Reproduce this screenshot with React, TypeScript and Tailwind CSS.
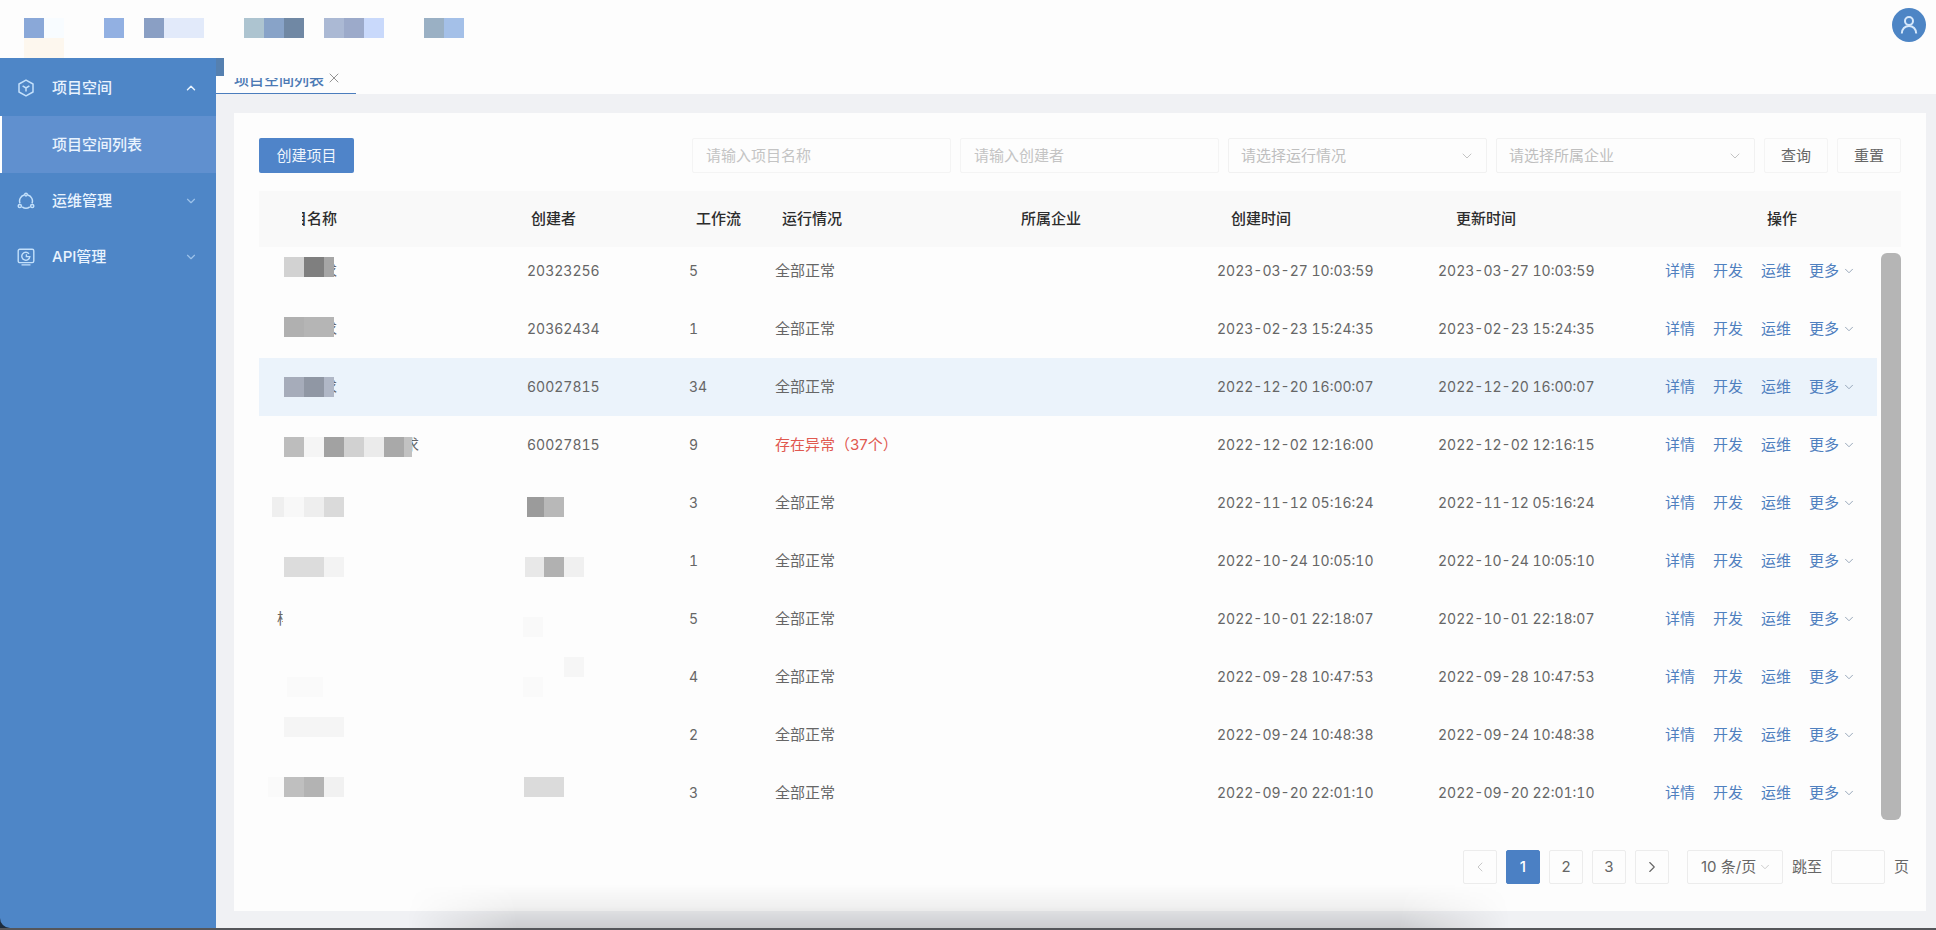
import React from "react";
import { ChevronDown, ChevronLeft, ChevronRight, ChevronUp, X } from "lucide-react";

type Tile = [x: number, y: number, w: number, fill: string];

const headerTiles: Tile[] = [
  [24, 0, 20, "#8aa8d8"],
  [44, 0, 20, "#f8fcff"],
  [104, 0, 20, "#92b0e2"],
  [144, 0, 20, "#8a9fc4"],
  [164, 0, 40, "#e2eafa"],
  [244, 0, 20, "#adc4d0"],
  [264, 0, 20, "#88a3c8"],
  [284, 0, 20, "#7088a4"],
  [324, 0, 20, "#abb9d4"],
  [344, 0, 20, "#9caaca"],
  [364, 0, 20, "#c9d9fb"],
  [424, 0, 20, "#9ab0c4"],
  [444, 0, 20, "#a4c0e8"],
  [24, 20, 40, "#fdf7ee"],
];

// Coordinates are relative to the top-left corner of the table body.
const bodyTiles: Tile[] = [
  [25, 10, 20, "#d2d2d2"],
  [45, 10, 20, "#7f7f7f"],
  [65, 10, 10, "#a6a6a6"],
  [25, 70, 20, "#b0b0b0"],
  [45, 70, 30, "#b5b5b5"],
  [25, 130, 20, "#a6acba"],
  [45, 130, 20, "#9097a4"],
  [65, 130, 10, "#b0b7c6"],
  [25, 190, 20, "#bdbdbd"],
  [45, 190, 20, "#f5f5f5"],
  [65, 190, 20, "#a2a2a2"],
  [85, 190, 20, "#d1d1d1"],
  [105, 190, 20, "#ebebeb"],
  [125, 190, 20, "#a9a9a9"],
  [145, 190, 8, "#c2c2c2"],
  [13, 250, 12, "#efefef"],
  [25, 250, 20, "#f8f8f8"],
  [45, 250, 20, "#eeeeee"],
  [65, 250, 20, "#dadada"],
  [268, 250, 17, "#9b9b9b"],
  [285, 250, 20, "#b8b8b8"],
  [25, 310, 40, "#dcdcdc"],
  [65, 310, 20, "#f3f3f3"],
  [266, 310, 19, "#e8e8e8"],
  [285, 310, 20, "#b1b1b1"],
  [305, 310, 20, "#f0f0f0"],
  [264, 370, 20, "#f9f9f9"],
  [305, 410, 20, "#f6f6f6"],
  [28, 430, 36, "#fafafa"],
  [264, 430, 20, "#fafafa"],
  [25, 470, 60, "#f5f5f5"],
  [9, 530, 16, "#fafafa"],
  [25, 530, 20, "#bfbfbf"],
  [45, 530, 20, "#b3b3b3"],
  [65, 530, 20, "#f1f1f1"],
  [265, 530, 40, "#dbdbdb"],
];

function Mosaic({ tiles, className }: { tiles: Tile[]; className: string }) {
  return (
    <svg className={className} shapeRendering="crispEdges" aria-hidden="true">
      {tiles.map(([x, y, w, fill]) => (
        <rect key={`${x}-${y}`} x={x} y={y} width={w} height={20} fill={fill} />
      ))}
    </svg>
  );
}

type Row = {
  name: "short" | "long" | "start" | "none";
  creator: string;
  flows: number;
  failures?: number;
  created: string;
  updated: string;
  active?: boolean;
};

const rows: Row[] = [
  { name: "short", creator: "20323256", flows: 5, created: "2023-03-27 10:03:59", updated: "2023-03-27 10:03:59" },
  { name: "short", creator: "20362434", flows: 1, created: "2023-02-23 15:24:35", updated: "2023-02-23 15:24:35" },
  { name: "short", creator: "60027815", flows: 34, created: "2022-12-20 16:00:07", updated: "2022-12-20 16:00:07", active: true },
  { name: "long", creator: "60027815", flows: 9, failures: 37, created: "2022-12-02 12:16:00", updated: "2022-12-02 12:16:15" },
  { name: "none", creator: "", flows: 3, created: "2022-11-12 05:16:24", updated: "2022-11-12 05:16:24" },
  { name: "none", creator: "", flows: 1, created: "2022-10-24 10:05:10", updated: "2022-10-24 10:05:10" },
  { name: "start", creator: "", flows: 5, created: "2022-10-01 22:18:07", updated: "2022-10-01 22:18:07" },
  { name: "none", creator: "", flows: 4, created: "2022-09-28 10:47:53", updated: "2022-09-28 10:47:53" },
  { name: "none", creator: "", flows: 2, created: "2022-09-24 10:48:38", updated: "2022-09-24 10:48:38" },
  { name: "none", creator: "", flows: 3, created: "2022-09-20 22:01:10", updated: "2022-09-20 22:01:10" },
];

function NameFragment({ kind }: { kind: Row["name"] }) {
  if (kind === "short") return <span className="ml-[56px] flex w-[4px] justify-end overflow-hidden">求</span>;
  if (kind === "long") return <span className="ml-[133px] flex w-[9px] justify-end overflow-hidden">求</span>;
  if (kind === "start") return <span className="flex w-[6px] overflow-hidden">样</span>;
  return null;
}

function CubeIcon() {
  return (
    <svg viewBox="0 0 18 18" className="size-[18px]" fill="none" stroke="currentColor" strokeWidth="1.5">
      <path d="M9 1.1 16 5v8L9 16.9 2 13V5Z" strokeLinejoin="round" />
      <path d="M5.6 6.8 9 9l3.4-2.2M9 9v3.6" />
    </svg>
  );
}

function CycleIcon() {
  return (
    <svg viewBox="0 0 18 18" className="size-[18px]" fill="none" stroke="currentColor" strokeWidth="1.5">
      <path d="M3 11.4A6.3 6.3 0 0 1 7.2 3M10.8 3A6.3 6.3 0 0 1 15 11.4M12.8 14.8a6.5 6.5 0 0 1-7.6 0" />
      <circle cx="9" cy="2.6" r="1.3" />
      <circle cx="2.8" cy="14" r="1.6" />
      <circle cx="15.2" cy="14" r="1.6" />
    </svg>
  );
}

function ApiIcon() {
  return (
    <svg viewBox="0 0 18 18" className="size-[18px]" fill="none" stroke="currentColor" strokeWidth="1.4">
      <rect x="1.2" y="1.2" width="15.6" height="13.4" rx="1.6" />
      <path d="M4.5 16.9h9M12 5.8A4 4 0 1 0 12.8 8.6H9.4V6.2" />
    </svg>
  );
}

function NavItem({ icon, label, open }: { icon: React.ReactNode; label: string; open?: boolean }) {
  return (
    <button type="button" aria-expanded={!!open} className="flex h-14 w-full items-center pr-[18px] pl-[17px] text-left">
      <span className="text-[#c3e0fb]">{icon}</span>
      <span className="ml-[17px] flex-1 font-medium">{label}</span>
      {open ? <ChevronUp className="size-[14px]" strokeWidth={2.5} /> : <ChevronDown className="size-[14px] text-[#9cc2ea]" strokeWidth={2} />}
    </button>
  );
}

function FilterSelect({ label }: { label: string }) {
  return (
    <div className="relative w-[259px]">
      <select aria-label={label} className="h-[35px] w-full appearance-none rounded-[2px] border border-[#f1f1f1] bg-transparent px-3 text-[#bfbfbf]">
        <option>{label}</option>
      </select>
      <ChevronDown className="pointer-events-none absolute top-[10px] right-3 size-4 text-[#c4c4c4]" strokeWidth={1.5} />
    </div>
  );
}

function Columns() {
  return (
    <colgroup>
      <col className="w-[250px]" />
      <col className="w-[162px]" />
      <col className="w-[86px]" />
      <col className="w-[242px]" />
      <col className="w-[200px]" />
      <col className="w-[221px]" />
      <col className="w-[228px]" />
      <col />
    </colgroup>
  );
}

const pageButton = "flex size-[34px] items-center justify-center rounded-[2px] border";
const numberCell = "pl-[18px] text-sm tabular-nums";

export default function App() {
  return (
    <div className="flex min-h-screen flex-col border-b-2 border-[#55565a] bg-[#fdfdfd] font-['Inter','Noto_Sans_CJK_SC',sans-serif] text-[15px] leading-6 text-[#666]">
      <header className="flex h-[58px] items-start justify-between pr-[10px]">
        <Mosaic tiles={headerTiles} className="mt-[18px] h-10 w-[480px]" />
        <button type="button" aria-label="用户" className="mt-2 flex size-[34px] items-center justify-center rounded-full bg-[#4d85c5] text-[#d6e8fb]">
          <svg viewBox="0 0 18 18" className="size-[18px]" fill="none" stroke="currentColor" strokeWidth="2">
            <circle cx="9" cy="5" r="4" />
            <path d="M1.8 17.6C1.8 13 5 10 9 10s7.2 3 7.2 7.6" />
          </svg>
        </button>
      </header>

      <div className="relative flex flex-1">
        <div className="flex w-[216px] shrink-0 bg-[#1d2c3d]">
          <nav className="relative flex-1 rounded-bl-[10px] bg-[#4e86c7] pt-[2px] text-[#e9f3fe]">
            <span className="absolute top-0 left-full h-[18px] w-2 bg-[#5580b0]" />
            <NavItem icon={<CubeIcon />} label="项目空间" open />
            <a href="#list" className="flex h-[57px] items-center border-l-2 border-white bg-[#6090cf] pl-[50px] font-medium">
              项目空间列表
            </a>
            <NavItem icon={<CycleIcon />} label="运维管理" />
            <NavItem icon={<ApiIcon />} label="API管理" />
          </nav>
        </div>

        <div className="flex min-w-0 flex-1 flex-col">
          <div className="flex h-9 bg-[#fdfdfd]">
            <div className="flex w-[140px] items-end border-b border-[#4b7dbd] pb-[3px] pl-[18px] leading-5 text-[#4b79b4]">
              <a href="#list" className="flex h-3 items-end overflow-hidden font-medium">
                项目空间列表
              </a>
              <button type="button" aria-label="关闭" className="ml-[2px] pb-1 text-[#777]">
                <X className="size-4" strokeWidth={1.2} />
              </button>
            </div>
          </div>

          <div className="flex flex-1 flex-col bg-[#f0f1f4] pt-[19px] pr-[10px] pb-[17px] pl-[18px]">
            <main className="flex flex-1 flex-col bg-[#fdfdfd] pt-[25px]">
              <div className="flex items-center justify-between px-[25px]">
                <button type="button" className="h-[35px] w-[95px] rounded-[2px] bg-[#4f84c9] text-[#eef5fd]">
                  创建项目
                </button>
                <form className="flex gap-[9px]">
                  <input aria-label="项目名称" placeholder="请输入项目名称" className="h-[35px] w-[259px] rounded-[2px] border border-[#f4f4f4] px-[13px] placeholder:text-[#c4c4c4]" />
                  <input aria-label="创建者" placeholder="请输入创建者" className="h-[35px] w-[259px] rounded-[2px] border border-[#f4f4f4] px-[13px] placeholder:text-[#c4c4c4]" />
                  <FilterSelect label="请选择运行情况" />
                  <FilterSelect label="请选择所属企业" />
                  <button type="button" className="h-[35px] w-16 rounded-[2px] border border-[#f4f4f4]">查询</button>
                  <button type="button" className="h-[35px] w-16 rounded-[2px] border border-[#f4f4f4]">重置</button>
                </form>
              </div>

              <div className="mt-[18px] px-[25px]">
                <div className="bg-[#f9f9f9] pr-6">
                  <table className="w-full table-fixed text-left text-[#2c2c2c]">
                    <Columns />
                    <thead>
                      <tr className="h-14">
                        <th className="pl-[43px] font-medium">
                          <span className="flex">
                            <span className="flex w-[5px] justify-end overflow-hidden">目</span>名称
                          </span>
                        </th>
                        <th className="pl-[22px] font-medium">创建者</th>
                        <th className="pl-[25px] font-medium">工作流</th>
                        <th className="pl-[25px] font-medium">运行情况</th>
                        <th className="pl-[22px] font-medium">所属企业</th>
                        <th className="pl-[32px] font-medium">创建时间</th>
                        <th className="pl-[36px] font-medium">更新时间</th>
                        <th className="pl-[119px] font-medium">操作</th>
                      </tr>
                    </thead>
                  </table>
                </div>

                <div className="relative flex gap-1 overflow-hidden">
                  <table className="-mt-[5px] w-full table-fixed">
                    <Columns />
                    <tbody>
                      {rows.map((row) => (
                        <tr key={row.created} className={row.active ? "h-[58px] bg-[#ebf3fb]" : "h-[58px]"}>
                          <td className="pl-[18px]">
                            <NameFragment kind={row.name} />
                          </td>
                          <td className={numberCell}>{row.creator}</td>
                          <td className={numberCell}>{row.flows}</td>
                          <td className="pl-[18px]">
                            {row.failures ? <span className="text-[#e0584f]">存在异常（{row.failures}个）</span> : "全部正常"}
                          </td>
                          <td />
                          <td className={numberCell}>{row.created}</td>
                          <td className={numberCell}>{row.updated}</td>
                          <td className="pl-[17px]">
                            <div className="flex items-center gap-[18px] text-[#4f80bf]">
                              <a href="#detail">详情</a>
                              <a href="#develop">开发</a>
                              <a href="#operate">运维</a>
                              <button type="button" className="flex items-center gap-[3px]">
                                更多
                                <ChevronDown className="size-[14px] text-[#8a9bb0]" strokeWidth={1.5} />
                              </button>
                            </div>
                          </td>
                        </tr>
                      ))}
                    </tbody>
                  </table>
                  <Mosaic tiles={bodyTiles} className="pointer-events-none absolute top-0 left-0 h-full w-[420px]" />
                  <div className="mt-[6px] mb-[2px] w-5 shrink-0 rounded-[6px] bg-[#b5b5b5]" />
                </div>
              </div>

              <div className="mt-7 flex items-center justify-end gap-[9px] pr-[17px]">
                <button type="button" aria-label="上一页" disabled className={`${pageButton} border-[#ececec] text-[#c8c8c8]`}>
                  <ChevronLeft className="size-4" strokeWidth={1.5} />
                </button>
                <button type="button" className={`${pageButton} border-[#4b80c4] bg-[#4b80c4] font-medium text-white`}>1</button>
                <button type="button" className={`${pageButton} border-[#ececec]`}>2</button>
                <button type="button" className={`${pageButton} border-[#ececec]`}>3</button>
                <button type="button" aria-label="下一页" className={`${pageButton} border-[#ececec]`}>
                  <ChevronRight className="size-[18px]" strokeWidth={1.5} />
                </button>
                <div className="relative ml-[9px] w-24">
                  <select aria-label="每页条数" className="h-[34px] w-full appearance-none rounded-[2px] border border-[#ececec] bg-transparent pl-[13px]">
                    <option>10 条/页</option>
                  </select>
                  <ChevronDown className="pointer-events-none absolute top-[10px] right-[11px] size-[14px] text-[#c4c4c4]" strokeWidth={1.5} />
                </div>
                <label htmlFor="jump">跳至</label>
                <input id="jump" className="h-[34px] w-[54px] rounded-[2px] border border-[#ececec] px-2" />
                <span>页</span>
              </div>
            </main>
          </div>
        </div>

        <div className="pointer-events-none absolute right-[22%] bottom-0 left-[21%] h-11 bg-linear-to-b from-black/0 via-black/5 to-black/15 mask-x-from-90% mask-x-to-100%" />
      </div>
    </div>
  );
}
